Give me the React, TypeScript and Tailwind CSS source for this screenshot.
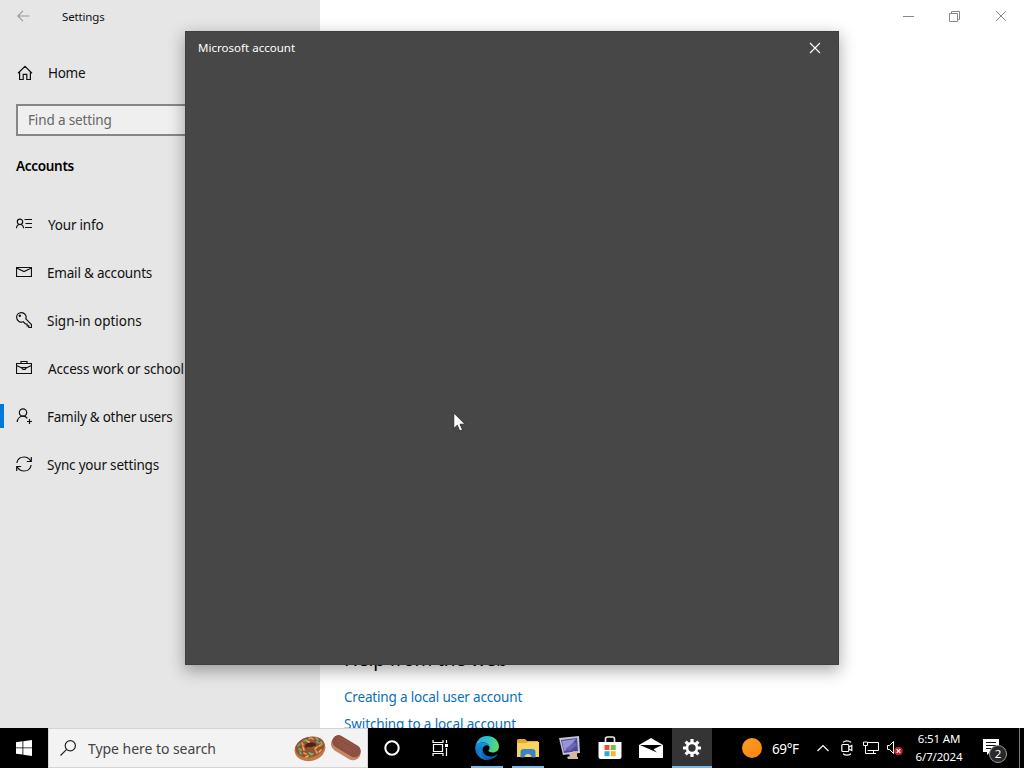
import type { ReactNode } from 'react';

const ink = { fill: 'none', stroke: 'currentColor', strokeWidth: 1.2 } as const;

function HomeIcon() {
  return (
    <svg width="16" height="16" viewBox="0 0 16 16" {...ink}>
      <path d="M1 8.2 8 1.4l7 6.8M2.6 7v7.5h3.6V9.3h3.6v5.2h3.6V7" />
    </svg>
  );
}
function InfoIcon() {
  return (
    <svg width="16" height="16" viewBox="0 0 16 16" {...ink}>
      <circle cx="4" cy="5.8" r="2.7" />
      <path d="M.4 12.2C.6 10 2 8.5 4 8.5s3.4 1.500 3.600 3.700M8.500 3.500H16M9.500 7.500H16M9 11.500H16" />
    </svg>
  );
}
function MailIcon() {
  return (
    <svg width="16" height="16" viewBox="0 0 16 16" {...ink}>
      <path d="M.5 3.500h15v9H.5zM.5 4 8 7.600 15.500 4" />
    </svg>
  );
}
function KeyIcon() {
  return (
    <svg width="16" height="16" viewBox="0 0 16 16" {...ink}>
      <path d="M9.800 6.800 15.500 12.500v3h-2.700v-1.700h-1.700v-1.800H9.500L7.300 9.800C4.500 11 .6 9 .6 5.300.6 2.700 2.700.6 5.300.6c3.500 0 5.700 3.200 4.500 6.200Z" />
      <circle cx="3.800" cy="3.800" r=".6" fill="currentColor" />
    </svg>
  );
}
function BriefcaseIcon() {
  return (
    <svg width="16" height="16" viewBox="0 0 16 16" {...ink}>
      <path d="M.5 3.500h15v10H.5zM5 3.500v-2h6v2M.5 5.500 6 8M15.500 5.500 10 8" />
      <path d="M6 7.500h4c0 2.600-4 2.600-4 0Z" />
    </svg>
  );
}
function FamilyIcon() {
  return (
    <svg width="16" height="16" viewBox="0 0 16 16" {...ink}>
      <circle cx="7" cy="4.500" r="3.700" />
      <path d="M1.200 14c.3-3.300 2.600-5.800 5.800-5.800 1.800 0 3.300.8 4.300 2.100M13.500 11v5M11 13.500h5" />
    </svg>
  );
}
function SyncIcon() {
  return (
    <svg width="16" height="16" viewBox="0 0 16 16" {...ink}>
      <path d="M.8 7C1.500 3.300 4.300 1 8 1c3 0 5.300 1.500 6.700 4M15.200 9c-.7 3.700-3.500 6-7.200 6-3 0-5.300-1.500-6.700-4M15.300 1v4.500h-4.500M.7 15v-4.500h4.500" />
    </svg>
  );
}

function NavItem({ icon, text, cls, active }: { icon: ReactNode; text: string; cls: string; active?: boolean }) {
  return (
    <div className="flex h-12 items-center">
      <div className={active ? 'h-6 w-1 bg-[#0078d7]' : 'h-6 w-1'} />
      <div className="ml-3 w-[31px]">{icon}</div>
      <div className={'whitespace-nowrap pt-0.5 text-[13.5px] ' + cls}>{text}</div>
    </div>
  );
}

function Sidebar() {
  return (
    <aside className="flex w-80 shrink-0 flex-col bg-[#e6e6e6] text-[#111]">
      <div className="flex h-8 items-center pl-[17px]">
        <svg width="13" height="12" viewBox="0 0 13 12" fill="none" stroke="#999" strokeWidth="1.100">
          <path d="M12.500 6H1M6 .8.8 6 6 11.200" />
        </svg>
        <span className="ml-8 pt-0.5 text-[11.5px] tracking-[-0.15px]">Settings</span>
      </div>
      <div className="mt-[17px] flex h-12 items-center pl-[17px]">
        <HomeIcon />
        <span className="ml-[15px] text-[13.5px] tracking-[-0.3px]">Home</span>
      </div>
      <div className="ml-4 mt-[7px] flex h-8 w-[288px] items-center border-2 border-[#868686] bg-[#efefef] pl-2.5 text-[13.5px] tracking-[-0.15px] text-[#666]">
        Find a setting
      </div>
      <div className="ml-4 mt-[19px] text-[13.500px] font-semibold leading-[22px] tracking-[-0.3px] text-black">Accounts</div>
      <nav className="mt-[23px] flex flex-col">
        <NavItem icon={<InfoIcon />} text="Your info" cls="pl-px tracking-[-0.2px]" />
        <NavItem icon={<MailIcon />} text="Email & accounts" cls="tracking-[-0.2px]" />
        <NavItem icon={<KeyIcon />} text="Sign-in options" cls="tracking-[-0.02px]" />
        <NavItem icon={<BriefcaseIcon />} text="Access work or school" cls="pl-px tracking-[-0.15px]" />
        <NavItem icon={<FamilyIcon />} text="Family & other users" cls="tracking-[-0.25px]" active />
        <NavItem icon={<SyncIcon />} text="Sync your settings" cls="tracking-[-0.2px]" />
      </nav>
    </aside>
  );
}

function Main() {
  return (
    <main className="flex flex-1 flex-col justify-between overflow-hidden bg-white">
      <div className="flex h-8 items-center justify-end pr-[17px] text-[#888]">
        <svg width="11" height="11" viewBox="0 0 11 11" fill="none" stroke="currentColor"><path d="M0 5.500h11" /></svg>
        <svg className="ml-[35px] mr-[35px]" width="11" height="11" viewBox="0 0 11 11" fill="none" stroke="currentColor"><path d="M.5 2.500h8v8h-8zM2.500 2.500v-2h8v8h-2" /></svg>
        <svg width="12" height="12" viewBox="0 0 12 12" fill="none" stroke="currentColor"><path d="m1 1 10 10M11 1 1 11" /></svg>
      </div>
      <div className="pl-6">
        <div className="text-[19px] leading-7 tracking-[-0.15px] text-black">Help from the web</div>
        <div className="mt-[14px] text-[13.5px] leading-[20px] tracking-[-0.17px] text-[#0a6fbb]">Creating a local user account</div>
        <div className="-mb-[6px] mt-[7px] text-[13.5px] leading-[20px] tracking-[-0.12px] text-[#0a6fbb]">Switching to a local account</div>
      </div>
    </main>
  );
}

function Dialog() {
  return (
    <section className="absolute left-[185px] top-[31px] h-[634px] w-[654px] border border-[#3f3f3f] bg-[#474747] shadow-[0_5px_15px_1px_rgba(0,0,0,0.32)]">
      <header className="flex h-8 items-center justify-between pl-3 pr-[17px] text-white">
        <span className="text-[11.5px] tracking-[0.02px]">Microsoft account</span>
        <svg width="12" height="12" viewBox="0 0 12 12" fill="none" stroke="currentColor" strokeWidth="1.2"><path d="m1 1 10 10M11 1 1 11" /></svg>
      </header>
    </section>
  );
}

function Donut() {
  return (
    <svg width="34" height="28" viewBox="0 0 34 28">
      <ellipse cx="17" cy="15" rx="15.500" ry="12" fill="#c07a48" transform="rotate(-12 17 15)" />
      <ellipse cx="17" cy="13" rx="14.800" ry="10.200" fill="#96512f" transform="rotate(-14 17 13)" />
      <ellipse cx="17.500" cy="11.500" rx="5.500" ry="3" fill="#4b2318" transform="rotate(-10 17.500 11.500)" />
      <path d="M14 13.500c2 1 6 .6 8-1" stroke="#a86a3c" strokeWidth="1.200" fill="none" />
      <g strokeWidth="1.700" strokeLinecap="round">
        <path d="m5 12 2-2m4-3 2-1m-6 12 1 2m16-12 2 1m-8 12 2-1" stroke="#55aa91" />
        <path d="m9 9 1 2m8-7 2 1m6 7 2-1m-17 8 2 1m10-3 1 2" stroke="#ed965b" />
        <path d="m6 15 2 1m8-11 1-1m6 0 2 2m3 2 1 2m-13 9 3 1" stroke="#7fb66b" />
        <path d="m10 13 1 3m3-9 2 1m8 5-2 2m-7 7-2 1m13-5 2-2" stroke="#dfb356" />
      </g>
    </svg>
  );
}
function Eclair() {
  return (
    <svg width="32" height="26" viewBox="0 0 32 26">
      <g transform="rotate(31 16 13)">
        <rect x="0" y="6" width="32" height="15" rx="7.500" fill="#c48563" />
        <rect x="0" y="5" width="31" height="12.500" rx="6" fill="#8d4f42" />
        <path d="M4 8.500c7-2 15-2 22-.5M6 11h20M8 13.500h15" stroke="#995b4b" strokeWidth=".8" fill="none" />
      </g>
    </svg>
  );
}

function Task({ children, state = '', w = 'w-[41px]' }: { children: ReactNode; state?: string; w?: string }) {
  return (
    <div className={'flex h-10 shrink-0 flex-col items-center ' + w + (state === 'active' ? ' bg-[#343434]' : '')}>
      <div className="flex h-[38px] items-center justify-center pt-0.5">{children}</div>
      <div className={state === 'active' ? 'h-0.5 w-full bg-[#76b9ed]' : state === 'open' ? 'h-0.5 w-8 bg-[#76b9ed]' : 'h-0.5'} />
    </div>
  );
}

function EdgeIcon() {
  return (
    <svg width="24" height="24" viewBox="0 0 24 24">
      <defs>
        <linearGradient id="edgeTop" x1="0" y1=".3" x2="1" y2=".5">
          <stop offset="0" stopColor="#2aa9ed" /><stop offset=".55" stopColor="#2ec6c5" /><stop offset="1" stopColor="#65d958" />
        </linearGradient>
        <linearGradient id="edgeSide" x1="0" y1="0" x2="0" y2="1">
          <stop offset="0" stopColor="#2394df" /><stop offset="1" stopColor="#0b55a8" />
        </linearGradient>
      </defs>
      <path d="M.2 12C1 4.500 5.500 0 12 0c7 0 12 4.800 12 10.500 0 3.800-2.800 6-6.200 6-3 0-4.700-1.100-4.300-2 .6-.8 1.100-1.500 1.100-2.900 0-3-3-5.100-6.700-5.100C3.800 6.500 1 8.800.2 12Z" fill="url(#edgeTop)" />
      <path d="M.2 12C.8 8.500 4 6.600 7.800 6.500c3.500 0 6.300 1.800 6.800 4.300-1-1.200-2.400-1.800-3.800-1.400C7.400 10.500 7 14 8.500 16.700c2.500 4.200 8.700 5.200 13 1.800.6-.4 1 .1.600.6C20 22 16.300 24 12 24 5.400 24 .2 18.700.2 12Z" fill="url(#edgeSide)" />
      <path d="M8.300 10.800C4 14.200 6.300 22.800 13 24 6 24.300 1.500 18 3.500 13.500c1-2 3-3 4.800-2.700Z" fill="#167dce" />
    </svg>
  );
}
function FolderIcon() {
  return (
    <svg width="22" height="19" viewBox="0 0 22 19">
      <path d="M0 1.500Q0 0 1.500 0H8l2 2h11v16H0z" fill="#e3a72c" />
      <path d="M0 4h9l2-1h11v15H0z" fill="#fbd25c" />
      <path d="M3.500 18.500V13q0-3 3-3h9q3 0 3 3v5.500h-4q0-3.500-3.500-3.500t-3.500 3.500z" fill="#3686ca" />
    </svg>
  );
}
function ComputerIcon() {
  return (
    <svg width="22" height="24" viewBox="0 0 22 24">
      <path d="m0 2 20-2 1 17-17 2z" fill="#c5c4d4" />
      <path d="m2 4 16-2 1 13-14 2z" fill="#4b4a9b" />
      <path d="m3 5 14-2-9 11-3 1z" fill="#9795d4" />
      <path d="m6 13 10-7 2 3-7 6z" fill="#6966b6" />
      <path d="m10 18 5-1 1 3 3 1v2H9l-1-2 3-1z" fill="#cbbdb1" />
      <path d="m14 15 4 1v7l-4-2z" fill="#e2b58c" />
    </svg>
  );
}
function StoreIcon() {
  return (
    <svg width="24" height="24" viewBox="0 0 24 24">
      <path d="M7.500 7V3Q7.500 1 9.500 1h5q2 0 2 2v4" fill="none" stroke="#eee" strokeWidth="1.600" />
      <path d="M.5 6h23v14.500q0 2.500-2.500 2.500H3Q.5 23 .5 20.500z" fill="#fff" />
      <path d="M6.500 9h5v5h-5z" fill="#e65331" /><path d="M12.700 9h5v5h-5z" fill="#80b943" />
      <path d="M6.500 15.200h5v5h-5z" fill="#35a6df" /><path d="M12.700 15.200h5v5h-5z" fill="#f3b632" />
    </svg>
  );
}
function MailAppIcon() {
  return (
    <svg width="24" height="20" viewBox="0 0 24 20">
      <path d="M0 7 12 0l12 7v13H0z" fill="#fff" />
      <path d="M1 7h22l-8.500 4.300 3.500 3.200L1 7Z" fill="#000" />
    </svg>
  );
}
function GearIcon() {
  return (
    <svg width="18" height="18" viewBox="0 0 18 18" fill="none">
      <circle cx="9" cy="9" r="5" stroke="#fff" strokeWidth="2.600" />
      <g stroke="#fff" strokeWidth="3.200">
        <path d="M9 0v4M9 14v4M0 9h4M14 9h4M2.600 2.600l3 3M12.400 12.400l3 3M15.400 2.600l-3 3M5.600 12.400l-3 3" />
      </g>
    </svg>
  );
}

function Tray() {
  return (
    <div className="ml-[30px] flex h-10 flex-1 items-center text-white">
      <svg width="20" height="20" viewBox="0 0 20 20">
        <defs><linearGradient id="sun" x1="0" y1="0" x2=".7" y2="1"><stop stopColor="#f3a02a" /><stop offset="1" stopColor="#ff850f" /></linearGradient></defs>
        <circle cx="10" cy="10" r="10" fill="url(#sun)" />
      </svg>
      <span className="ml-2.5 w-[45px] whitespace-nowrap pt-0.5 text-[13.5px] tracking-[-0.4px]">69°F</span>
      <svg width="12" height="8" viewBox="0 0 12 8" fill="none" stroke="currentColor" strokeWidth="1.200"><path d="m.5 7 5.500-5.500L11.500 7" /></svg>
      <svg className="ml-3" width="12" height="16" viewBox="0 0 12 16" fill="none" stroke="currentColor" strokeWidth="1.200">
        <path d="M2 2.200Q6-.6 10 2.200M2 13.800q4 2.800 8 0" />
        <rect x=".8" y="4.500" width="7" height="7" rx="1" /><path d="m7.800 7 3-1.500v5l-3-1.500" />
      </svg>
      <svg className="ml-2.5" width="16" height="14" viewBox="0 0 16 14" fill="none" stroke="currentColor">
        <path d="M5 1.500h10.500v8H4.500M.5 1v3.500h4V1h-4M2.500 4.500v8h8M10.500 9.500v3M7 12.500h6" />
      </svg>
      <svg className="ml-2" width="17" height="16" viewBox="0 0 17 16" fill="none" stroke="currentColor">
        <path d="M.5 5.500h2l4-4v12l-4-4h-2z" />
        <circle cx="11.500" cy="11" r="4.300" fill="#c5202b" stroke="none" /><path d="m9.700 9.200 3.600 3.600m0-3.600-3.600 3.600" strokeWidth="1.200" />
      </svg>
      <div className="ml-1.5 flex w-[58px] flex-col items-center whitespace-nowrap text-[11.5px] leading-[18px] tracking-[-0.15px]">
        <span>6:51 AM</span>
        <span>6/7/2024</span>
      </div>
      <div className="relative ml-3.5 h-6 w-6">
        <svg width="24" height="24" viewBox="0 0 24 24">
          <path d="M1 3h16v13H8l-3 3v-3H1z" fill="#fff" />
          <path d="M4 6.500h10M4 9.500h10M4 12.500h7" stroke="#111" />
        </svg>
        <span className="absolute left-[7px] top-[9px] flex h-[18px] w-[18px] items-center justify-center rounded-full border border-[#999] bg-[#292929] text-[11.5px]">2</span>
      </div>
      <div className="ml-auto mr-1 h-10 w-px bg-[#777]" />
    </div>
  );
}

function Taskbar() {
  return (
    <footer className="flex h-10 shrink-0 bg-black">
      <div className="flex w-12 items-center justify-center">
        <svg width="16" height="16" viewBox="0 0 16 16" fill="#fff"><path d="m0 2.200 6.500-.9v6.200H0zM7.300 1.200 16 0v7.500H7.300zM0 8.300h6.500v6.300L0 13.700zM7.300 8.300H16V16l-8.700-1.300z" /></svg>
      </div>
      <div className="flex w-80 items-center border border-[#d4d4d4] bg-[#f3f3f3] pl-[11px]">
        <svg width="16" height="16" viewBox="0 0 16 16" fill="none" stroke="#222" strokeWidth="1.200"><circle cx="10.300" cy="5.700" r="5.100" /><path d="M6.700 9.300.5 15.500" /></svg>
        <span className="ml-3 w-[205px] whitespace-nowrap text-[14px] tracking-[-0.05px] text-[#444]">Type here to search</span>
        <Donut />
        <div className="ml-[3px]"><Eclair /></div>
      </div>
      <Task w="w-12"><svg width="18" height="18" viewBox="0 0 18 18" fill="none" stroke="#fff" strokeWidth="2"><circle cx="9" cy="9" r="6.700" /></svg></Task>
      <Task w="w-12">
        <svg width="17" height="16" viewBox="0 0 17 16" fill="none" stroke="#fff" strokeWidth="1.200">
          <path d="M1.500 4.500h9v7h-9zM1 0v2.500h10V0M1 16v-2.500h10V16M14.500 0v3M14.500 8v8" /><path d="M13 4h3v3h-3z" fill="#fff" stroke="none" />
        </svg>
      </Task>
      <div className="ml-0.5 flex">
        <Task state="open"><EdgeIcon /></Task>
        <Task state="open"><FolderIcon /></Task>
        <Task><div className="ml-0.5"><ComputerIcon /></div></Task>
        <Task><StoreIcon /></Task>
        <Task><MailAppIcon /></Task>
        <div className="ml-px"><Task w="w-10" state="active"><GearIcon /></Task></div>
      </div>
      <Tray />
    </footer>
  );
}

export default function App() {
  return (
    <div className="relative flex h-[768px] w-[1024px] flex-col overflow-hidden bg-white font-['Noto_Sans',sans-serif]">
      <div className="flex h-[728px] overflow-hidden">
        <Sidebar />
        <Main />
      </div>
      <Dialog />
      <Taskbar />
      <svg className="absolute left-[453px] top-[412px]" width="13" height="20" viewBox="0 0 13 20">
        <path d="M.8 1v15.500l3.500-3.300L6.800 19l2.700-1.200L7 12.200h5z" fill="#fff" stroke="#222" strokeWidth=".8" />
      </svg>
    </div>
  );
}
